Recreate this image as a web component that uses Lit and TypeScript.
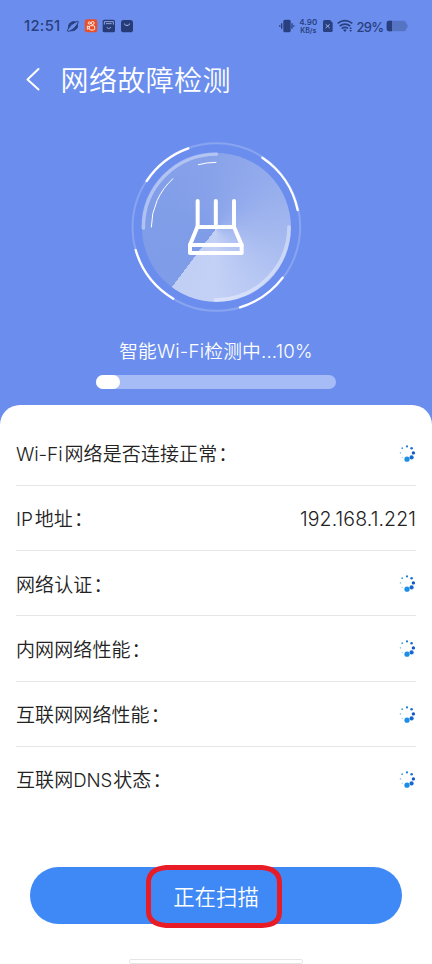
import { LitElement, html, css, svg } from "lit";
import { customElement, property } from "lit/decorators.js";

interface Check {
  latin?: string;
  label: string;
  abbr?: string;
  tail?: string;
  value?: string;
}

const CHECKS: Check[] = [
  { latin: "Wi-Fi", label: "网络是否连接正常" },
  { latin: "IP", label: "地址", value: "192.168.1.221" },
  { label: "网络认证" },
  { label: "内网网络性能" },
  { label: "互联网网络性能" },
  { label: "互联网", abbr: "DNS", tail: "状态" },
];

const DOTS: [number, number, number, string][] = [
  [10, 3.4, 1.1, "#1c7fd0"],
  [14.6, 5.2, 1.3, "#1a6fd0"],
  [16.4, 9.9, 1.7, "#1259c6"],
  [14.6, 14.4, 2.1, "#1668d2"],
  [10, 16.2, 2.6, "#1b8fe6"],
  [5.2, 14.4, 0.6, "#8fd0ea"],
  [3.5, 9.9, 0.8, "#8cc4e0"],
  [5.2, 5.2, 0.9, "#3ba0d8"],
];

@customElement("scan-spinner")
class ScanSpinner extends LitElement {
  static styles = css`
    :host { display: block; width: 20px; height: 20px; }
    svg { display: block; }
  `;
  render() {
    return html`<svg width="20" height="20" viewBox="0 0 20 20">
      ${DOTS.map(([x, y, r, c]) => svg`<circle cx=${x} cy=${y} r=${r} fill=${c} />`)}
    </svg>`;
  }
}

@customElement("status-bar")
class StatusBar extends LitElement {
  static styles = css`
    :host { display: flex; height: 52px; align-items: center; box-sizing: border-box; padding: 0 23.7px 0 24px; color: #28407f; font-family: Inter, sans-serif; }
    svg { display: block; flex: none; }
    .time { font-size: 14.8px; font-weight: 500; width: 38px; letter-spacing: 0.3px; white-space: nowrap; }
    .left { display: flex; align-items: center; gap: 4px; flex: 1; }
    .right { display: flex; align-items: center; }
    .speed { width: 21px; margin: 0 3.3px 0 3px; text-align: center; font-size: 8px; line-height: 9px; font-weight: 600; white-space: nowrap; }
    .speed span { display: block; }
    .speed .unit { font-size: 7px; line-height: 7px; }
    .wifi { margin: 0 3.8px 0 2.7px; }
    .pct { font-size: 13px; font-weight: 500; width: 29.8px; white-space: nowrap; letter-spacing: -0.7px; padding-top: 1px; }
  `;
  render() {
    return html`
      <div class="left">
        <span class="time">12:51</span>
        <svg width="14" height="14" viewBox="198 56 42 42" fill="none" stroke="#28407f" stroke-linecap="round">
          <path d="M206 83C203 70 215 61 227 65Q214 71 206 83Z" fill="#28407f" stroke-width="3" />
          <path d="M212 91C226 94 236 82 232 72Q225 84 212 91Z" fill="#28407f" stroke-width="3" />
          <path d="M206 83Q199 92 204 93Q208 93 212 91M227 65Q235 61 235 64Q235 67 232 72" stroke-width="3" />
        </svg>
        <svg width="14" height="14" viewBox="252 56 42 42">
          <rect x="254" y="57" width="38" height="39" rx="7" fill="#e9502a" />
          <g fill="none" stroke="#fff" stroke-width="2.6">
            <circle cx="268" cy="68" r="3.5" /><circle cx="278" cy="68" r="4.5" />
            <rect x="268" y="76" width="16" height="13" rx="4" /><path d="M268 80L262 77V87L268 84" />
          </g>
        </svg>
        <svg width="14" height="14" viewBox="306 56 42 42">
          <rect x="308" y="58" width="37" height="38" rx="5" fill="#263b78" />
          <g fill="none" stroke="#a9bdf2" stroke-width="2.5">
            <path d="M313 73V64H340V73M318 70H335" /><path d="M320 81Q326 89 333 81" />
          </g>
        </svg>
        <svg width="14" height="14" viewBox="360 56 42 42">
          <rect x="363" y="59" width="36" height="37" rx="8" fill="#263b78" />
          <path d="M372 70Q381 81 390 70" fill="none" stroke="#a9bdf2" stroke-width="3" />
        </svg>
      </div>
      <div class="right">
        <svg width="16" height="14" viewBox="188 56 48 42" fill="#28407f">
          <rect x="201" y="58" width="22" height="38" rx="5" />
          <path d="M194 69h4v16h-4zM189 74h3v6h-3zM225 69h4v16h-4zM231 74h3v6h-3z" />
        </svg>
        <div class="speed"><span>4.90</span><span class="unit">KB/s</span></div>
        <svg width="12" height="14" viewBox="318 56 36 42">
          <path d="M326 59H342L350 67V91Q350 95 346 95H325Q321 95 321 91V64Q321 59 326 59Z" fill="#28407f" />
          <path d="M329 72L341 83M341 72L329 83" stroke="#9fb5ef" stroke-width="3" />
        </svg>
        <svg class="wifi" width="16" height="14" viewBox="362 56 48 42" fill="none" stroke="#28407f" stroke-width="5">
          <path d="M364 69Q386 53 408 69M370 77Q386 66 402 77M376 85Q386 78 395 84" />
          <path d="M380 89Q386 85 391 89L386 95Z" fill="#28407f" stroke="none" />
          <path d="M399 86L403 80L407 86ZM399 89L403 95L407 89Z" fill="#28407f" stroke="none" />
        </svg>
        <span class="pct">29%</span>
        <svg width="22" height="12" viewBox="511 61 66 36">
          <path d="M519 63H565Q571 63 572 71Q576 74 576 79Q576 84 572 87Q571 95 565 95H519Q513 95 513 88V70Q513 63 519 63Z" fill="#5674c4" />
          <path d="M529 63H519Q513 63 513 70V88Q513 95 519 95H529Z" fill="#28407f" />
        </svg>
      </div>
    `;
  }
}

@customElement("router-dial")
class RouterDial extends LitElement {
  static styles = css`
    :host { display: grid; width: 190px; height: 190px; margin-right: 2px; }
    .disc {
      grid-area: 1 / 1; width: 149px; height: 149px; margin: 22.5px 0 0 21.8px; border-radius: 50%;
      background: conic-gradient(from 217deg at 49.6% 50.8%, #7f9ce8 0deg, #809de8 70deg, #89a3ea 143deg, #94aced 190deg, #a3b7ef 233deg, #b5c6f3 280deg, #c4d1f6 325deg, #c2cff5 360deg);
    }
    svg { grid-area: 1 / 1; display: block; }
  `;
  render() {
    return html`
      <div class="disc"></div>
      <svg width="190" height="190" viewBox="0 0 570 570" fill="none" stroke="#fff" stroke-linecap="round" stroke-linejoin="round">
        <circle cx="289" cy="291" r="251.500" stroke-width="6" opacity=".2" />
        <g stroke-width="7">
          <path d="M80 153A251 251 0 0 1 205 55" />
          <path d="M427 83A251 251 0 0 1 533 240" />
          <path d="M47 360A251 251 0 0 0 160 506" />
          <path d="M360 532A251 251 0 0 0 488 443" />
        </g>
        <g stroke-width="11" opacity=".38">
          <path d="M70 294A220 220 0 0 1 289 72" />
          <path d="M507 291A220 220 0 0 1 286 510" />
        </g>
        <g stroke-width="3">
          <path d="M94 291A195 195 0 0 1 159 146" />
          <path d="M235 104Q261 97 288 97" />
        </g>
        <g stroke-width="12">
          <path d="M233 213V290M287.500 213V290M342 213V290" />
          <path d="M232 291H342L365 345V369H210V345Z" /><path d="M210 345H365" />
        </g>
      </svg>
    `;
  }
}

@customElement("check-row")
class CheckRow extends LitElement {
  @property({ attribute: false }) item!: Check;
  static styles = css`
    :host { display: flex; align-items: center; justify-content: space-between; height: 65.25px; box-sizing: border-box; border-bottom: 1px solid #e6e6e6; color: #222; font-size: 19px; white-space: nowrap; }
    :host(:last-child) { border-bottom-color: transparent; }
    .label { display: flex; align-items: baseline; letter-spacing: 0.1px; }
    .latin, .abbr, .value { font-family: Inter, sans-serif; font-weight: 350; }
    .latin { margin-right: 2px; letter-spacing: -0.1px; }
    .abbr { font-size: 18.6px; letter-spacing: -0.1px; margin-right: 1px; }
    .colon { padding-left: 1px; }
    .value { font-size: 19.500px; letter-spacing: 0.1px; padding-top: 2px; }
    scan-spinner { margin-right: -0.5px; }
  `;
  render() {
    const { latin, label, abbr, tail, value } = this.item;
    return html`
      <div class="label">${latin ? html`<span class="latin">${latin}</span>` : ""}<span>${label}</span>${abbr ? html`<span class="abbr">${abbr}</span><span>${tail}</span>` : ""}<span class="colon">：</span></div>
      ${value ? html`<span class="value">${value}</span>` : html`<scan-spinner></scan-spinner>`}
    `;
  }
}

@customElement("app-root")
class AppRoot extends LitElement {
  @property({ type: Number }) progress = 10;
  static styles = css`
    :host {
      display: flex; flex-direction: column; width: 432px; height: 964px; overflow: hidden;
      background: #6b8eee; font-family: "Noto Sans CJK SC", sans-serif; font-weight: 350;
    }
    .header { display: flex; align-items: center; height: 54px; padding-left: 26px; color: #fff; }
    .header svg { display: block; margin-right: 20.500px; }
    .title { margin: 0; font-size: 28px; font-weight: inherit; letter-spacing: 0.4px; line-height: 54px; }
    .hero { display: flex; flex-direction: column; align-items: center; height: 299px; padding-top: 24px; box-sizing: border-box; color: #fff; }
    .caption { height: 30px; line-height: 30px; margin-top: 17px; font-family: Inter, "Noto Sans CJK SC", sans-serif; font-size: 18.700px; letter-spacing: 0.2px; white-space: nowrap; }
    .track { width: 240px; height: 14.500px; margin-top: 7.500px; border-radius: 8px; background: #a6bcf6; }
    .fill { height: 100%; border-radius: 8px; background: #fff; }
    .card { flex: 1; display: flex; flex-direction: column; background: #fff; border-radius: 20px 20px 0 0; padding: 15.500px 16px 0; }
    .button {
      margin: 55px 14px 0; height: 57px; border-radius: 29px; background: #3f89f6; color: #fff;
      display: grid; place-items: center; font-size: 21.400px; line-height: 57px; position: relative;
    }
    .mark { position: absolute; left: 116px; top: -2px; width: 136px; height: 63px; }
    .home { width: 172px; height: 3px; border: 1px solid #e6e6e6; border-radius: 2px; margin: 35px 0 0 113px; }
  `;
  render() {
    return html`
      <status-bar></status-bar>
      <div class="header">
        <svg width="14" height="24" viewBox="0 0 14 24" fill="none" stroke="#fff" stroke-width="2" stroke-linecap="round" stroke-linejoin="round"><path d="M12.500 2L1.500 12.500L12.500 22.500" /></svg>
        <h1 class="title">网络故障检测</h1>
      </div>
      <div class="hero">
        <router-dial></router-dial>
        <div class="caption">智能Wi-Fi检测中...${this.progress}%</div>
        <div class="track"><div class="fill" style="width:${this.progress}%"></div></div>
      </div>
      <div class="card">
        <div>${CHECKS.map((c) => html`<check-row .item=${c}></check-row>`)}</div>
        <div class="button">正在扫描
          <svg class="mark" viewBox="0 0 136 63" fill="none"><path d="M20 2.500H116Q133.500 4 133.500 18V47Q133.500 60 116 60.500H20Q2.500 59 2.500 46V17Q3 4 20 2.500Z" stroke="#e81c27" stroke-width="5" /></svg>
        </div>
        <div class="home"></div>
      </div>
    `;
  }
}
